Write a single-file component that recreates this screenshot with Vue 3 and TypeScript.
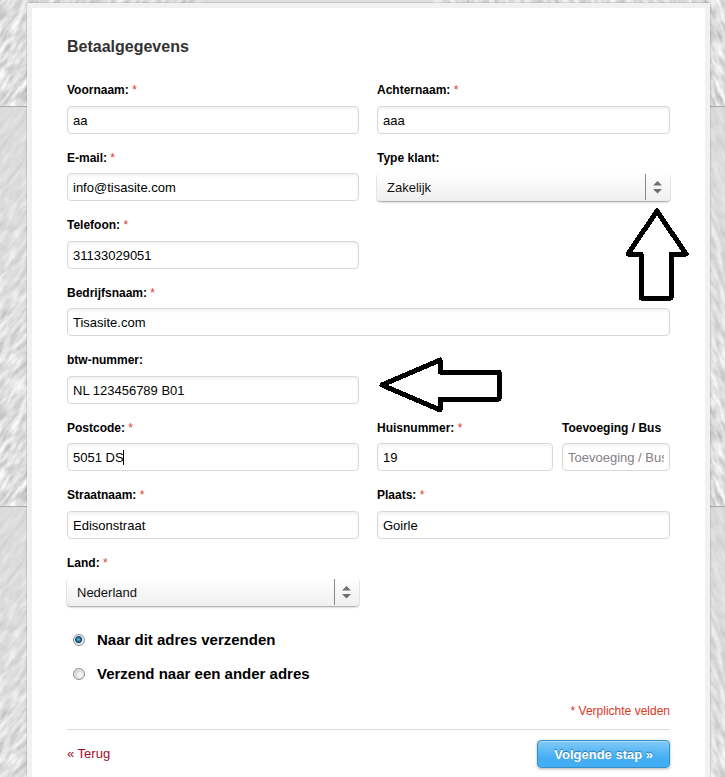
<script setup lang="ts">
import { ref } from 'vue'

interface Field {
  id: string
  label: string
  value: string
  place: 'left' | 'right' | 'full' | 'medium' | 'small'
  required?: boolean
  options?: string[]
  placeholder?: string
  pointer?: 'points-up' | 'points-left'
  caret?: boolean
}

const fields = ref<Field[]>([
  { id: 'voornaam', label: 'Voornaam:', value: 'aa', place: 'left', required: true },
  { id: 'achternaam', label: 'Achternaam:', value: 'aaa', place: 'right', required: true },
  { id: 'email', label: 'E-mail:', value: 'info@tisasite.com', place: 'left', required: true },
  { id: 'type', label: 'Type klant:', value: 'Zakelijk', place: 'right', options: ['Particulier', 'Zakelijk'], pointer: 'points-up' },
  { id: 'telefoon', label: 'Telefoon:', value: '31133029051', place: 'left', required: true },
  { id: 'bedrijf', label: 'Bedrijfsnaam:', value: 'Tisasite.com', place: 'full', required: true },
  { id: 'btw', label: 'btw-nummer:', value: 'NL 123456789 B01', place: 'left', pointer: 'points-left' },
  { id: 'postcode', label: 'Postcode:', value: '5051 DS', place: 'left', required: true, caret: true },
  { id: 'huisnummer', label: 'Huisnummer:', value: '19', place: 'medium', required: true },
  { id: 'bus', label: 'Toevoeging / Bus', value: '', place: 'small', placeholder: 'Toevoeging / Bus' },
  { id: 'straat', label: 'Straatnaam:', value: 'Edisonstraat', place: 'left', required: true },
  { id: 'plaats', label: 'Plaats:', value: 'Goirle', place: 'right', required: true },
  { id: 'land', label: 'Land:', value: 'Nederland', place: 'left', required: true, options: ['Nederland', 'België'] },
])

const shipping = ref('same')
const tiles = [-294, 106, 506, 906]
</script>

<template>
  <div class="page">
    <svg class="backdrop" aria-hidden="true">
      <defs>
        <filter id="grain" x="0" y="0" width="100%" height="100%" color-interpolation-filters="sRGB">
          <feTurbulence type="fractalNoise" baseFrequency="0.06 0.2" numOctaves="3" seed="8" />
          <feColorMatrix values="0.5 0 0 0 0.62  0.5 0 0 0 0.62  0.5 0 0 0 0.62  0 0 0 0 1" />
        </filter>
        <linearGradient id="haze" x1="0" y1="0" x2="0" y2="1">
          <stop offset="0" stop-color="#dadada" stop-opacity="0.8" />
          <stop offset="0.5" stop-color="#e0e0e0" stop-opacity="0.4" />
          <stop offset="1" stop-color="#e4e4e4" stop-opacity="0.05" />
        </linearGradient>
      </defs>
      <svg v-for="y in tiles" :key="y" x="0" :y="y" width="100%" height="400">
        <g transform="rotate(-52)">
          <rect x="-420" y="-20" width="500" height="360" filter="url(#grain)" />
        </g>
        <svg x="50%" y="0" width="50%" height="400">
          <g transform="translate(340 0) rotate(68)">
            <rect x="-100" y="-120" width="560" height="480" filter="url(#grain)" />
          </g>
        </svg>
        <rect width="100%" height="400" fill="url(#haze)" />
        <rect width="100%" height="1" fill="#aaa" />
      </svg>
    </svg>

    <main class="card">
      <h1>Betaalgegevens</h1>
      <form @submit.prevent>
        <div class="fields">
          <div v-for="field in fields" :key="field.id" class="field" :class="field.place">
            <label :for="field.id">{{ field.label }} <span v-if="field.required" class="star">*</span></label>
            <div v-if="field.options" class="select">
              <select :id="field.id" v-model="field.value">
                <option v-for="option in field.options" :key="option">{{ option }}</option>
              </select>
              <svg class="stepper" viewBox="0 0 25 26" aria-hidden="true">
                <path d="M.5 0V26" stroke="#888" />
                <path d="M8 11.500L12.500 7L17 11.500ZM8 15L12.500 19.500L17 15Z" fill="#707070" />
              </svg>
            </div>
            <div v-else class="control">
              <input :id="field.id" v-model="field.value" type="text" :placeholder="field.placeholder" />
              <span v-if="field.caret" class="caret"></span>
            </div>
            <svg v-if="field.pointer === 'points-up'" class="pointer points-up" viewBox="0 0 64 94" aria-hidden="true">
              <path d="M31 4L60 47H45V91H15V47H2Z" />
            </svg>
            <svg v-if="field.pointer === 'points-left'" class="pointer points-left" viewBox="0 0 124 58" aria-hidden="true">
              <path d="M3 29L61 4V16H120V43H61V54Z" />
            </svg>
          </div>
        </div>

        <div class="shipping">
          <label><input v-model="shipping" type="radio" name="shipping" value="same" />Naar dit adres verzenden</label>
          <label><input v-model="shipping" type="radio" name="shipping" value="other" />Verzend naar een ander adres</label>
        </div>

        <p class="required">* Verplichte velden</p>
        <footer class="actions">
          <a href="#">« Terug</a>
          <button type="submit">Volgende stap »</button>
        </footer>
      </form>
    </main>
  </div>
</template>

<style>
body {
  margin: 0;
}
</style>

<style scoped>
* {
  box-sizing: border-box;
}
.page {
  position: relative;
  display: flex;
  min-height: 100vh;
  padding: 3px 15px 0 27px;
  font: 12px/16px "Liberation Sans", Arial, sans-serif;
  color: #000;
}
.backdrop {
  position: absolute;
  inset: 0;
  width: 100%;
  height: 100%;
  background: #dfdfdf;
}
.card {
  position: relative;
  flex: 1;
  padding: 29px 35px 8px;
  border: 5px solid #f1f1f1;
  border-bottom: 0;
  background: #fff;
  box-shadow: 0 0 2px rgba(0, 0, 0, 0.3);
}
h1 {
  margin: 0 0 25px;
  font-size: 16px;
  line-height: 20px;
  color: #333;
}
.fields {
  display: grid;
  grid-template-columns: minmax(0, 292fr) 0 minmax(0, 176fr) minmax(0, 108fr);
  grid-auto-rows: 52px 51px;
  gap: 16px 9px;
}
.field {
  position: relative;
  display: flex;
  flex-direction: column;
  justify-content: space-between;
}
.left {
  grid-column: 1;
}
.right {
  grid-column: 3 / 5;
}
.full {
  grid-column: 1 / -1;
}
.medium {
  grid-column: 3;
}
.small {
  grid-column: 4;
}
.field > label {
  font-weight: bold;
  white-space: nowrap;
}
.star {
  font-weight: normal;
  color: #e0402a;
}
.control {
  position: relative;
}
.control input {
  display: block;
  width: 100%;
  height: 28px;
  padding: 0 5px;
  border: 1px solid #d9d9d9;
  border-radius: 4px;
  outline: 0;
  background: #fff;
  box-shadow: inset 0 2px 3px rgba(0, 0, 0, 0.06);
  font: 13px "Liberation Sans", Arial, sans-serif;
  color: #000;
}
.control input::placeholder {
  color: #858085;
}
.caret {
  position: absolute;
  top: 7px;
  left: 56px;
  width: 1px;
  height: 15px;
  background: #000;
}
.select {
  position: relative;
}
select {
  display: block;
  width: 100%;
  height: 28px;
  padding: 0 34px 0 10px;
  border: 0;
  border-radius: 4px;
  appearance: none;
  background: linear-gradient(#fff, #efefef);
  box-shadow: 0 1px 2px rgba(0, 0, 0, 0.4);
  clip-path: inset(0 -1px -3px -1px);
  font: 13px "Liberation Sans", Arial, sans-serif;
  color: #111;
}
.stepper {
  position: absolute;
  top: 1px;
  right: 0;
  width: 25px;
  height: 26px;
  pointer-events: none;
}
.pointer {
  position: absolute;
  z-index: 1;
  fill: #fff;
  stroke: #000;
  stroke-width: 5;
  stroke-linejoin: round;
  shape-rendering: crispEdges;
  pointer-events: none;
}
.points-up {
  top: 57px;
  right: -20px;
  width: 64px;
  height: 94px;
}
.points-left {
  top: 4px;
  left: calc(100% + 20px);
  width: 124px;
  height: 58px;
}
.shipping {
  display: flex;
  flex-direction: column;
  gap: 14px;
  margin-top: 24px;
  padding-left: 6px;
}
.shipping label {
  display: flex;
  align-items: center;
  gap: 12px;
  font-size: 15px;
  line-height: 20px;
  font-weight: bold;
}
.shipping input {
  width: 12px;
  height: 12px;
  margin: 0;
  border: 1px solid #8e8f8f;
  border-radius: 50%;
  appearance: none;
  background: radial-gradient(circle at 60% 60%, #f4f4f4 20%, #c4c4c4 75%);
  box-shadow: inset 0 0 0 1px #eee;
}
.shipping input:checked {
  background: radial-gradient(circle at 45% 45%, #6fd0f2 0, #1c6a9a 2px, #123f5e 3px, #d5e3e9 4px);
}
.required {
  margin: 19px 0 10px;
  text-align: right;
  color: #dc3522;
}
.actions {
  display: flex;
  align-items: center;
  justify-content: space-between;
  padding-top: 10px;
  border-top: 1px solid #dcdcdc;
}
.actions a {
  font-size: 13px;
  text-decoration: none;
  color: #a00d28;
}
.actions button {
  height: 28px;
  padding: 0 16px;
  border: 1px solid #358fc9;
  border-radius: 4px;
  background: linear-gradient(#83caf7, #43aef3 65%);
  box-shadow: 0 1px 3px rgba(0, 0, 0, 0.3), inset 0 1px 0 rgba(255, 255, 255, 0.3);
  font: bold 13px "Liberation Sans", Arial, sans-serif;
  color: #fff;
  text-shadow: 0 -1px 1px rgba(0, 70, 120, 0.6);
}
</style>
